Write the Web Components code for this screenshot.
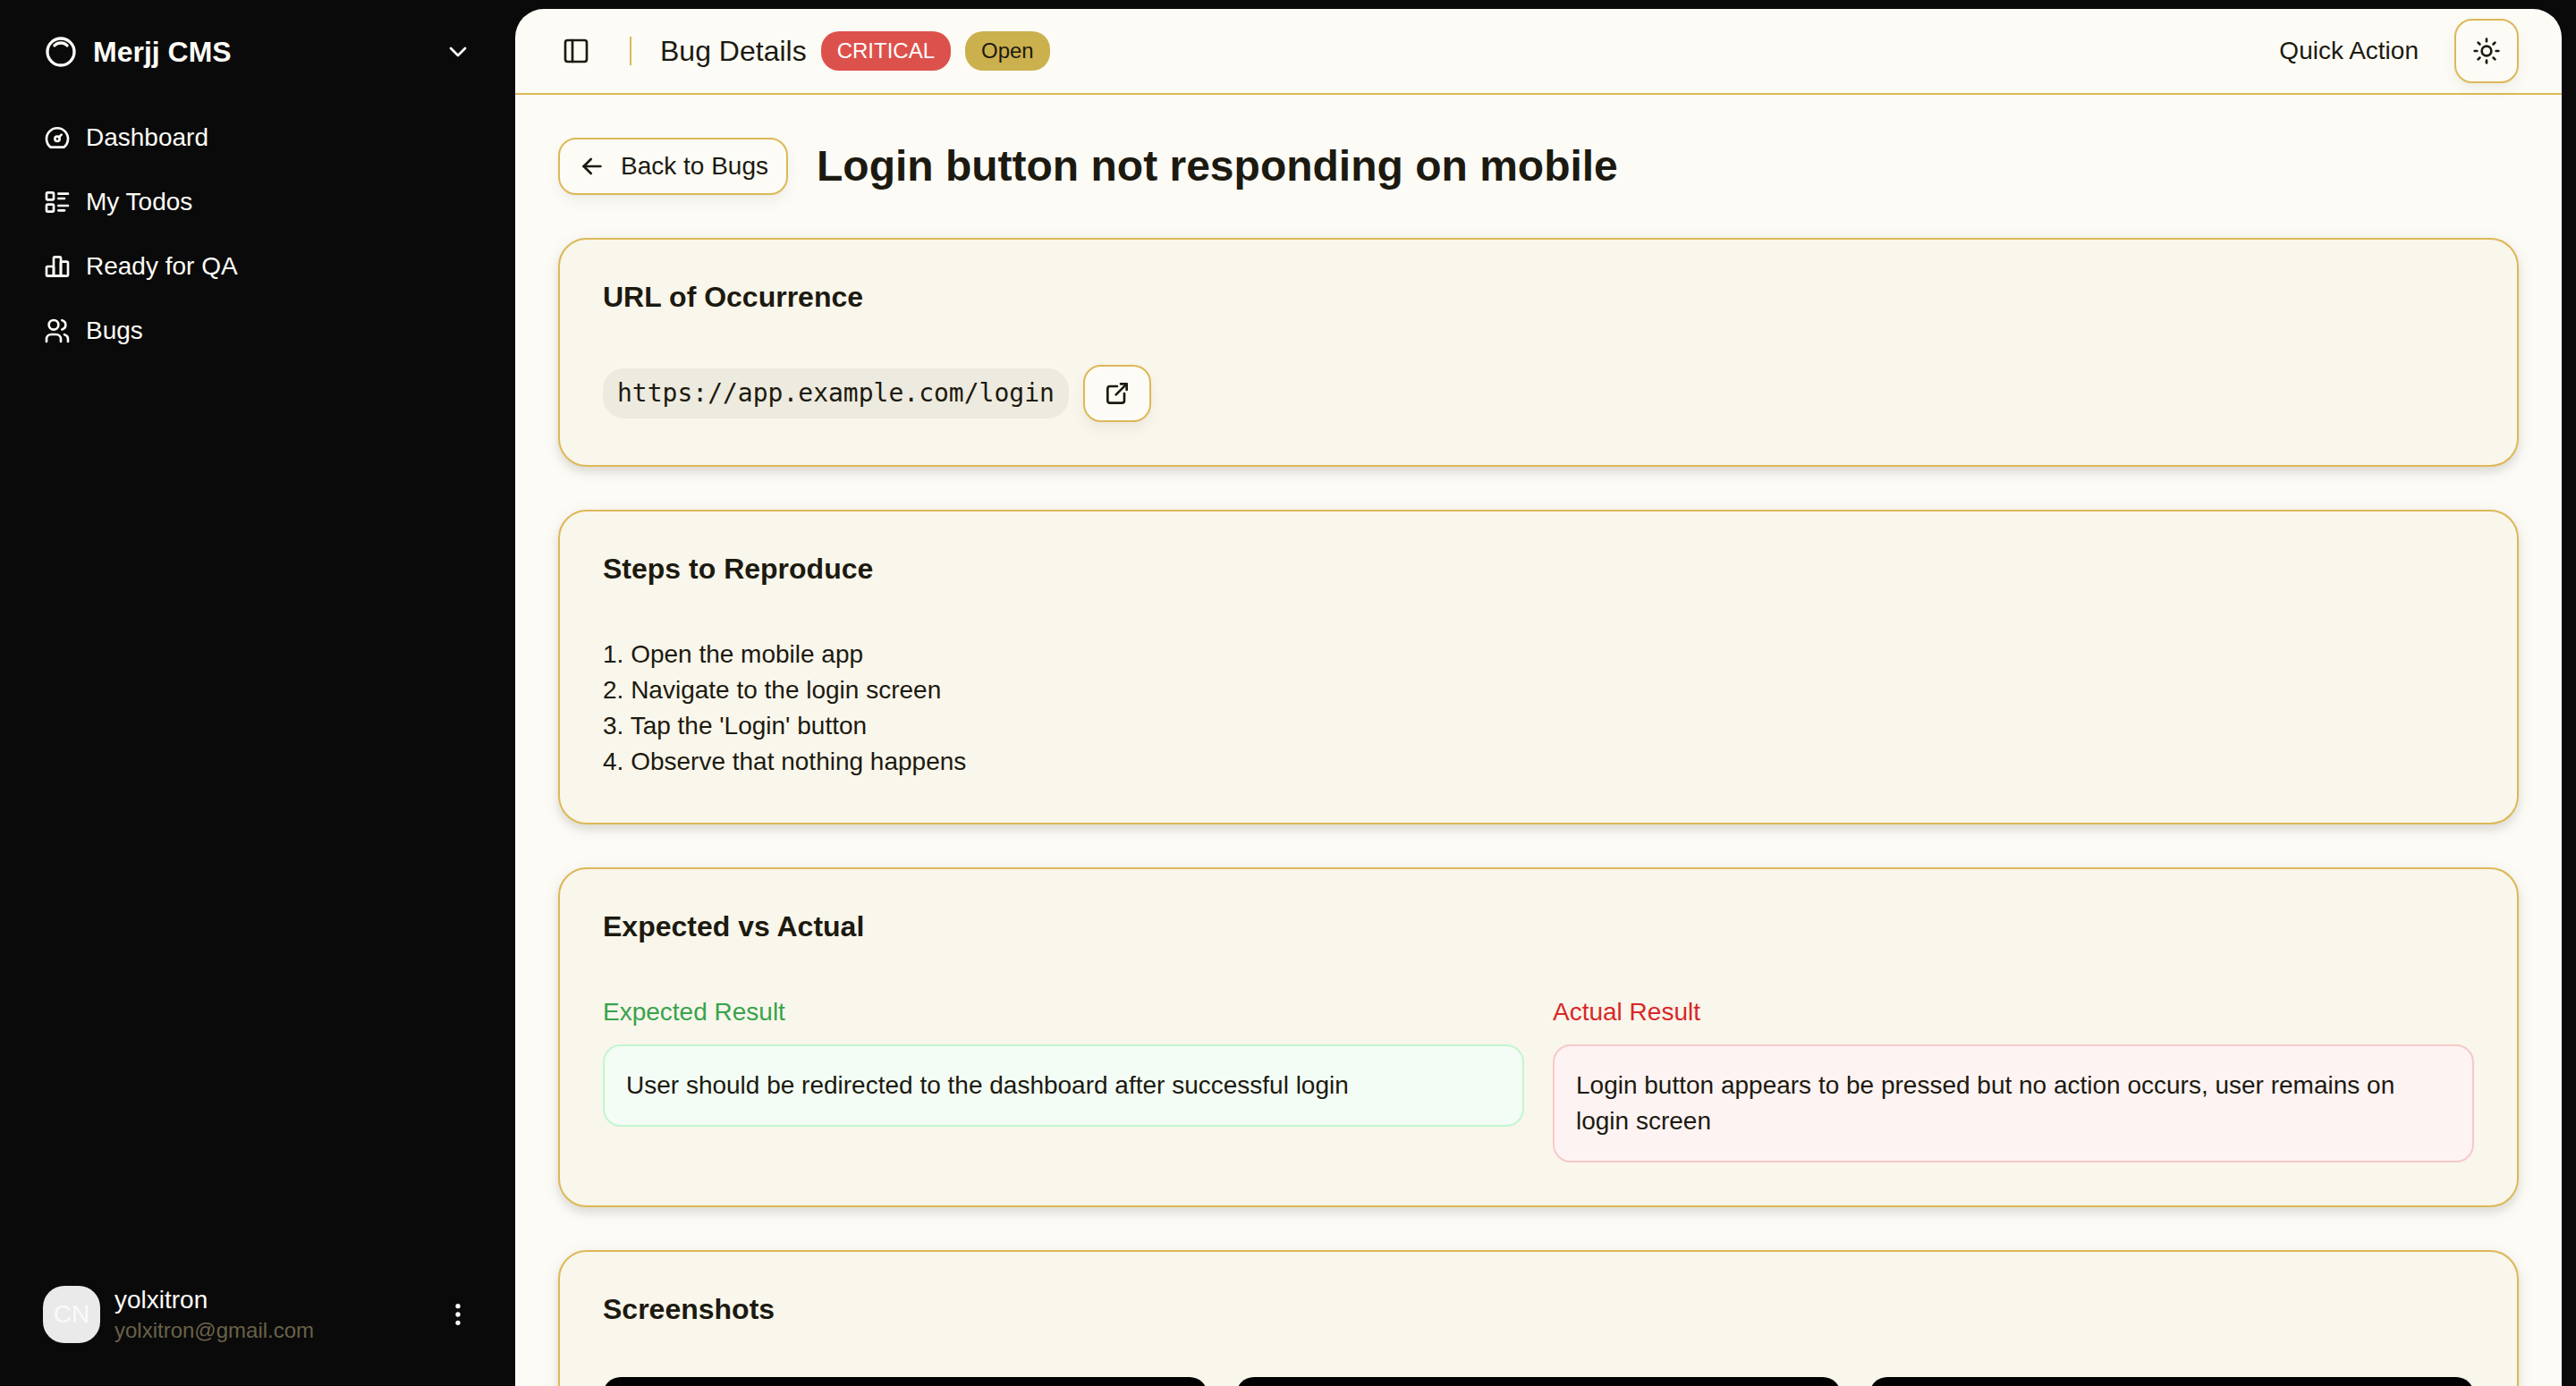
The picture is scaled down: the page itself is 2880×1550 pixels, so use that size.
<!DOCTYPE html>
<html lang="en">
<head>
<meta charset="utf-8">
<title>Bug Details · Merjj CMS</title>
<style>
  :root {
    --ink: #1c1a10;
    --paper: #fcfbf6;
    --card: #f9f6eb;
    --line: #ddb857;
    --night: #0a0a0a;
    --cream: #fdfcf7;
  }
  html, body { margin: 0; height: 100%; background: #000; }
  body {
    font-family: "Liberation Sans", Arial, Helvetica, sans-serif;
    font-size: 28px;
    line-height: 40px;
    color: var(--ink);
    overflow: hidden;
  }
</style>
</head>
<body>
<app-shell>
  <side-bar slot="sidebar">
    <nav-item icon="gauge">Dashboard</nav-item>
    <nav-item icon="list">My Todos</nav-item>
    <nav-item icon="bars">Ready for QA</nav-item>
    <nav-item icon="users">Bugs</nav-item>
    <user-menu slot="footer" initials="CN" name="yolxitron" email="yolxitron@gmail.com"></user-menu>
  </side-bar>
  <top-bar heading="Bug Details">
    <status-badge tone="critical">CRITICAL</status-badge>
    <status-badge tone="open">Open</status-badge>
  </top-bar>
  <bug-page heading="Login button not responding on mobile">
    <info-card heading="URL of Occurrence">
      <link-row href="https://app.example.com/login"></link-row>
    </info-card>
    <info-card heading="Steps to Reproduce">
      <step-list>1. Open the mobile app
2. Navigate to the login screen
3. Tap the 'Login' button
4. Observe that nothing happens</step-list>
    </info-card>
    <info-card heading="Expected vs Actual" columns="2">
      <result-box tone="good" label="Expected Result">User should be redirected to the dashboard after successful login</result-box>
      <result-box tone="bad" label="Actual Result">Login button appears to be pressed but no action occurs, user remains on login screen</result-box>
    </info-card>
    <info-card heading="Screenshots" columns="3">
      <shot-tile></shot-tile>
      <shot-tile></shot-tile>
      <shot-tile></shot-tile>
    </info-card>
  </bug-page>
</app-shell>

<script>
const ICONS = {
  ring: '<path d="M5.636 5.636a9 9 0 1 0 12.728 12.728a9 9 0 0 0 -12.728 -12.728z"/><path d="M16.243 7.757a6 6 0 0 0 -8.486 0"/>',
  chevron: '<path d="m6 9 6 6 6-6"/>',
  gauge: '<circle cx="12" cy="13" r="2"/><path d="M13.45 11.55l2.05 -2.05"/><path d="M6.4 20a9 9 0 1 1 11.2 0z"/>',
  list: '<path d="M13 5h8"/><path d="M13 9h5"/><path d="M13 15h8"/><path d="M13 19h5"/><rect x="3" y="4" width="6" height="6" rx="1"/><rect x="3" y="14" width="6" height="6" rx="1"/>',
  bars: '<path d="M3 13a1 1 0 0 1 1 -1h4a1 1 0 0 1 1 1v6a1 1 0 0 1 -1 1h-4a1 1 0 0 1 -1 -1z"/><path d="M15 9a1 1 0 0 1 1 -1h4a1 1 0 0 1 1 1v10a1 1 0 0 1 -1 1h-4a1 1 0 0 1 -1 -1z"/><path d="M9 5a1 1 0 0 1 1 -1h4a1 1 0 0 1 1 1v14a1 1 0 0 1 -1 1h-4a1 1 0 0 1 -1 -1z"/><path d="M4 20h14"/>',
  users: '<circle cx="9" cy="7" r="4"/><path d="M3 21v-2a4 4 0 0 1 4 -4h4a4 4 0 0 1 4 4v2"/><path d="M16 3.13a4 4 0 0 1 0 7.75"/><path d="M21 21v-2a4 4 0 0 0 -3 -3.85"/>',
  dots: '<circle cx="12" cy="12" r="1"/><circle cx="12" cy="19" r="1"/><circle cx="12" cy="5" r="1"/>',
  panel: '<rect x="3" y="3" width="18" height="18" rx="2"/><path d="M9 3v18"/>',
  sun: '<circle cx="12" cy="12" r="4"/><path d="M12 2v2"/><path d="M12 20v2"/><path d="m4.93 4.93 1.41 1.41"/><path d="m17.66 17.66 1.41 1.41"/><path d="M2 12h2"/><path d="M20 12h2"/><path d="m6.34 17.66-1.41 1.41"/><path d="m19.07 4.93-1.41 1.41"/>',
  back: '<path d="M5 12l14 0"/><path d="M5 12l6 6"/><path d="M5 12l6 -6"/>',
  external: '<path d="M12 6h-6a2 2 0 0 0 -2 2v10a2 2 0 0 0 2 2h10a2 2 0 0 0 2 -2v-6"/><path d="M11 13l9 -9"/><path d="M15 4h5v5"/>'
};

const BASE = `
  *, *::before, *::after { box-sizing: border-box; }
  :host { display: block; box-sizing: border-box; }
  button, a { font: inherit; color: inherit; text-decoration: none; background: none; border: 0; padding: 0; margin: 0; cursor: pointer; }
  h1, h2, h3, p { margin: 0; font-weight: 400; }
  .outlined {
    display: inline-flex; align-items: center; justify-content: center; gap: 16px; flex: none;
    border: 2px solid var(--line); border-radius: 20px; background: var(--paper);
    box-shadow: 0 8px 16px rgba(28, 26, 16, .05), 0 2px 4px rgba(28, 26, 16, .02);
  }
`;

function define(name, css, render) {
  customElements.define(name, class extends HTMLElement {
    connectedCallback() {
      if (this.shadowRoot) return;
      const root = this.attachShadow({ mode: 'open' });
      root.innerHTML = `<style>${BASE}${css}</style>${render(this)}`;
    }
  });
}

define('ui-icon', `
  :host { flex: none; width: 32px; height: 32px; }
  :host([size="large"]) { width: 40px; height: 40px; }
  svg { display: block; width: 100%; height: 100%; fill: none; stroke: currentColor; stroke-width: 2; stroke-linecap: round; stroke-linejoin: round; }
`, el => `<svg viewBox="0 0 24 24" aria-hidden="true">${ICONS[el.getAttribute('name')]}</svg>`);

define('app-shell', `
  :host { display: grid; grid-template-columns: 576px minmax(0, 1fr); height: 100vh; padding-right: 16px; background: var(--night); }
  main { margin-top: 10px; background: var(--paper); border-radius: 32px 32px 0 0; overflow: hidden; }
`, () => `<slot name="sidebar"></slot><main><slot></slot></main>`);

define('side-bar', `
  :host { display: flex; flex-direction: column; padding: 26px 48px 45px; color: var(--cream); border-bottom: 1px solid #000; }
  .brand { display: flex; align-items: center; gap: 16px; height: 64px; font-size: 32px; font-weight: 700; text-align: left; }
  .brand span { flex: 1; }
  nav { display: flex; flex-direction: column; gap: 8px; padding-top: 32px; flex: 1; }
`, () => `
  <button class="brand" type="button"><ui-icon name="ring" size="large"></ui-icon><span>Merjj CMS</span><ui-icon name="chevron"></ui-icon></button>
  <nav><slot></slot></nav>
  <slot name="footer"></slot>
`);

define('nav-item', `
  a { display: flex; align-items: center; gap: 16px; height: 64px; }
`, el => `<a href="#"><ui-icon name="${el.getAttribute('icon')}"></ui-icon><span><slot></slot></span></a>`);

define('user-menu', `
  button { display: flex; align-items: center; gap: 16px; width: 100%; text-align: left; }
  .avatar { display: flex; align-items: center; justify-content: center; width: 64px; height: 64px; border-radius: 24px; background: #eaeaea; color: #fafafa; }
  .who { display: flex; flex-direction: column; flex: 1; }
  .name { line-height: 36px; }
  .mail { font-size: 24px; line-height: 32px; color: #696149; }
`, el => `
  <button type="button">
    <span class="avatar">${el.getAttribute('initials')}</span>
    <span class="who"><span class="name">${el.getAttribute('name')}</span><span class="mail">${el.getAttribute('email')}</span></span>
    <ui-icon name="dots"></ui-icon>
  </button>
`);

define('top-bar', `
  :host { display: flex; align-items: center; justify-content: space-between; height: 96px; padding: 0 48px 0 52px; border-bottom: 2px solid var(--line); }
  .group { display: flex; align-items: center; gap: 16px; }
  .rule { width: 2px; height: 32px; margin: 0 16px 0 28px; background: var(--line); }
  h2 { font-size: 32px; }
  .quick { padding: 0 24px; }
  .theme { width: 72px; height: 72px; }
`, el => `
  <div class="group">
    <button type="button" aria-label="Toggle sidebar"><ui-icon name="panel"></ui-icon></button>
    <span class="rule"></span>
    <h2>${el.getAttribute('heading')}</h2>
    <slot></slot>
  </div>
  <div class="group">
    <button class="quick" type="button">Quick Action</button>
    <button class="theme outlined" type="button" aria-label="Toggle theme"><ui-icon name="sun"></ui-icon></button>
  </div>
`);

define('status-badge', `
  :host { padding: 6px 18px; border-radius: 20px; font-size: 24px; line-height: 32px; }
  :host([tone="critical"]) { background: #dd514c; color: #fff; }
  :host([tone="open"]) { background: #cbb04e; }
`, () => `<slot></slot>`);

define('bug-page', `
  :host { display: flex; flex-direction: column; gap: 48px; padding: 48px; }
  header { display: flex; align-items: center; gap: 32px; }
  .back { height: 64px; padding: 0 20px; }
  h1 { font-size: 48px; line-height: 64px; font-weight: 700; }
`, el => `
  <header>
    <a class="back outlined" href="#"><ui-icon name="back"></ui-icon><span>Back to Bugs</span></a>
    <h1>${el.getAttribute('heading')}</h1>
  </header>
  <slot></slot>
`);

define('info-card', `
  :host { padding: 48px; border: 2px solid var(--line); border-radius: 32px; background: var(--card); box-shadow: 0 4px 20px rgba(28, 26, 16, .07), 0 6px 10px rgba(28, 26, 16, .09); }
  h3 { font-size: 32px; line-height: 32px; font-weight: 700; margin-bottom: 60px; }
  .body { display: grid; gap: 32px; align-items: start; }
  :host([columns="2"]) .body { grid-template-columns: repeat(2, minmax(0, 1fr)); }
  :host([columns="3"]) .body { grid-template-columns: repeat(3, minmax(0, 1fr)); }
`, el => `<h3>${el.getAttribute('heading')}</h3><div class="body"><slot></slot></div>`);

define('link-row', `
  :host { display: flex; align-items: center; gap: 16px; }
  code { padding: 8px 16px; border-radius: 24px; background: #edeadf; font-family: "DejaVu Sans Mono", Menlo, monospace; font-size: 28px; line-height: 40px; }
  a { height: 64px; padding: 0 20px; }
`, el => `
  <code>${el.getAttribute('href')}</code>
  <a class="outlined" href="${el.getAttribute('href')}" aria-label="Open link"><ui-icon name="external"></ui-icon></a>
`);

define('step-list', `:host { white-space: pre-line; }`, () => `<slot></slot>`);

define('result-box', `
  :host { display: flex; flex-direction: column; gap: 16px; }
  p { padding: 24px; border: 2px solid; border-radius: 20px; }
  :host([tone="good"]) h3 { color: #38a34c; }
  :host([tone="good"]) p { background: #f3fdf5; border-color: #c3f5d1; }
  :host([tone="bad"]) h3 { color: #d72828; }
  :host([tone="bad"]) p { background: #fdf3f2; border-color: #f6c9c9; }
  h3 { font-size: 28px; }
  p span { color: var(--ink); }
`, el => `<h3>${el.getAttribute('label')}</h3><p><span><slot></slot></span></p>`);

define('shot-tile', `:host { aspect-ratio: 16 / 9; border-radius: 20px; background: #000; }`, () => ``);
</script>
</body>
</html>
